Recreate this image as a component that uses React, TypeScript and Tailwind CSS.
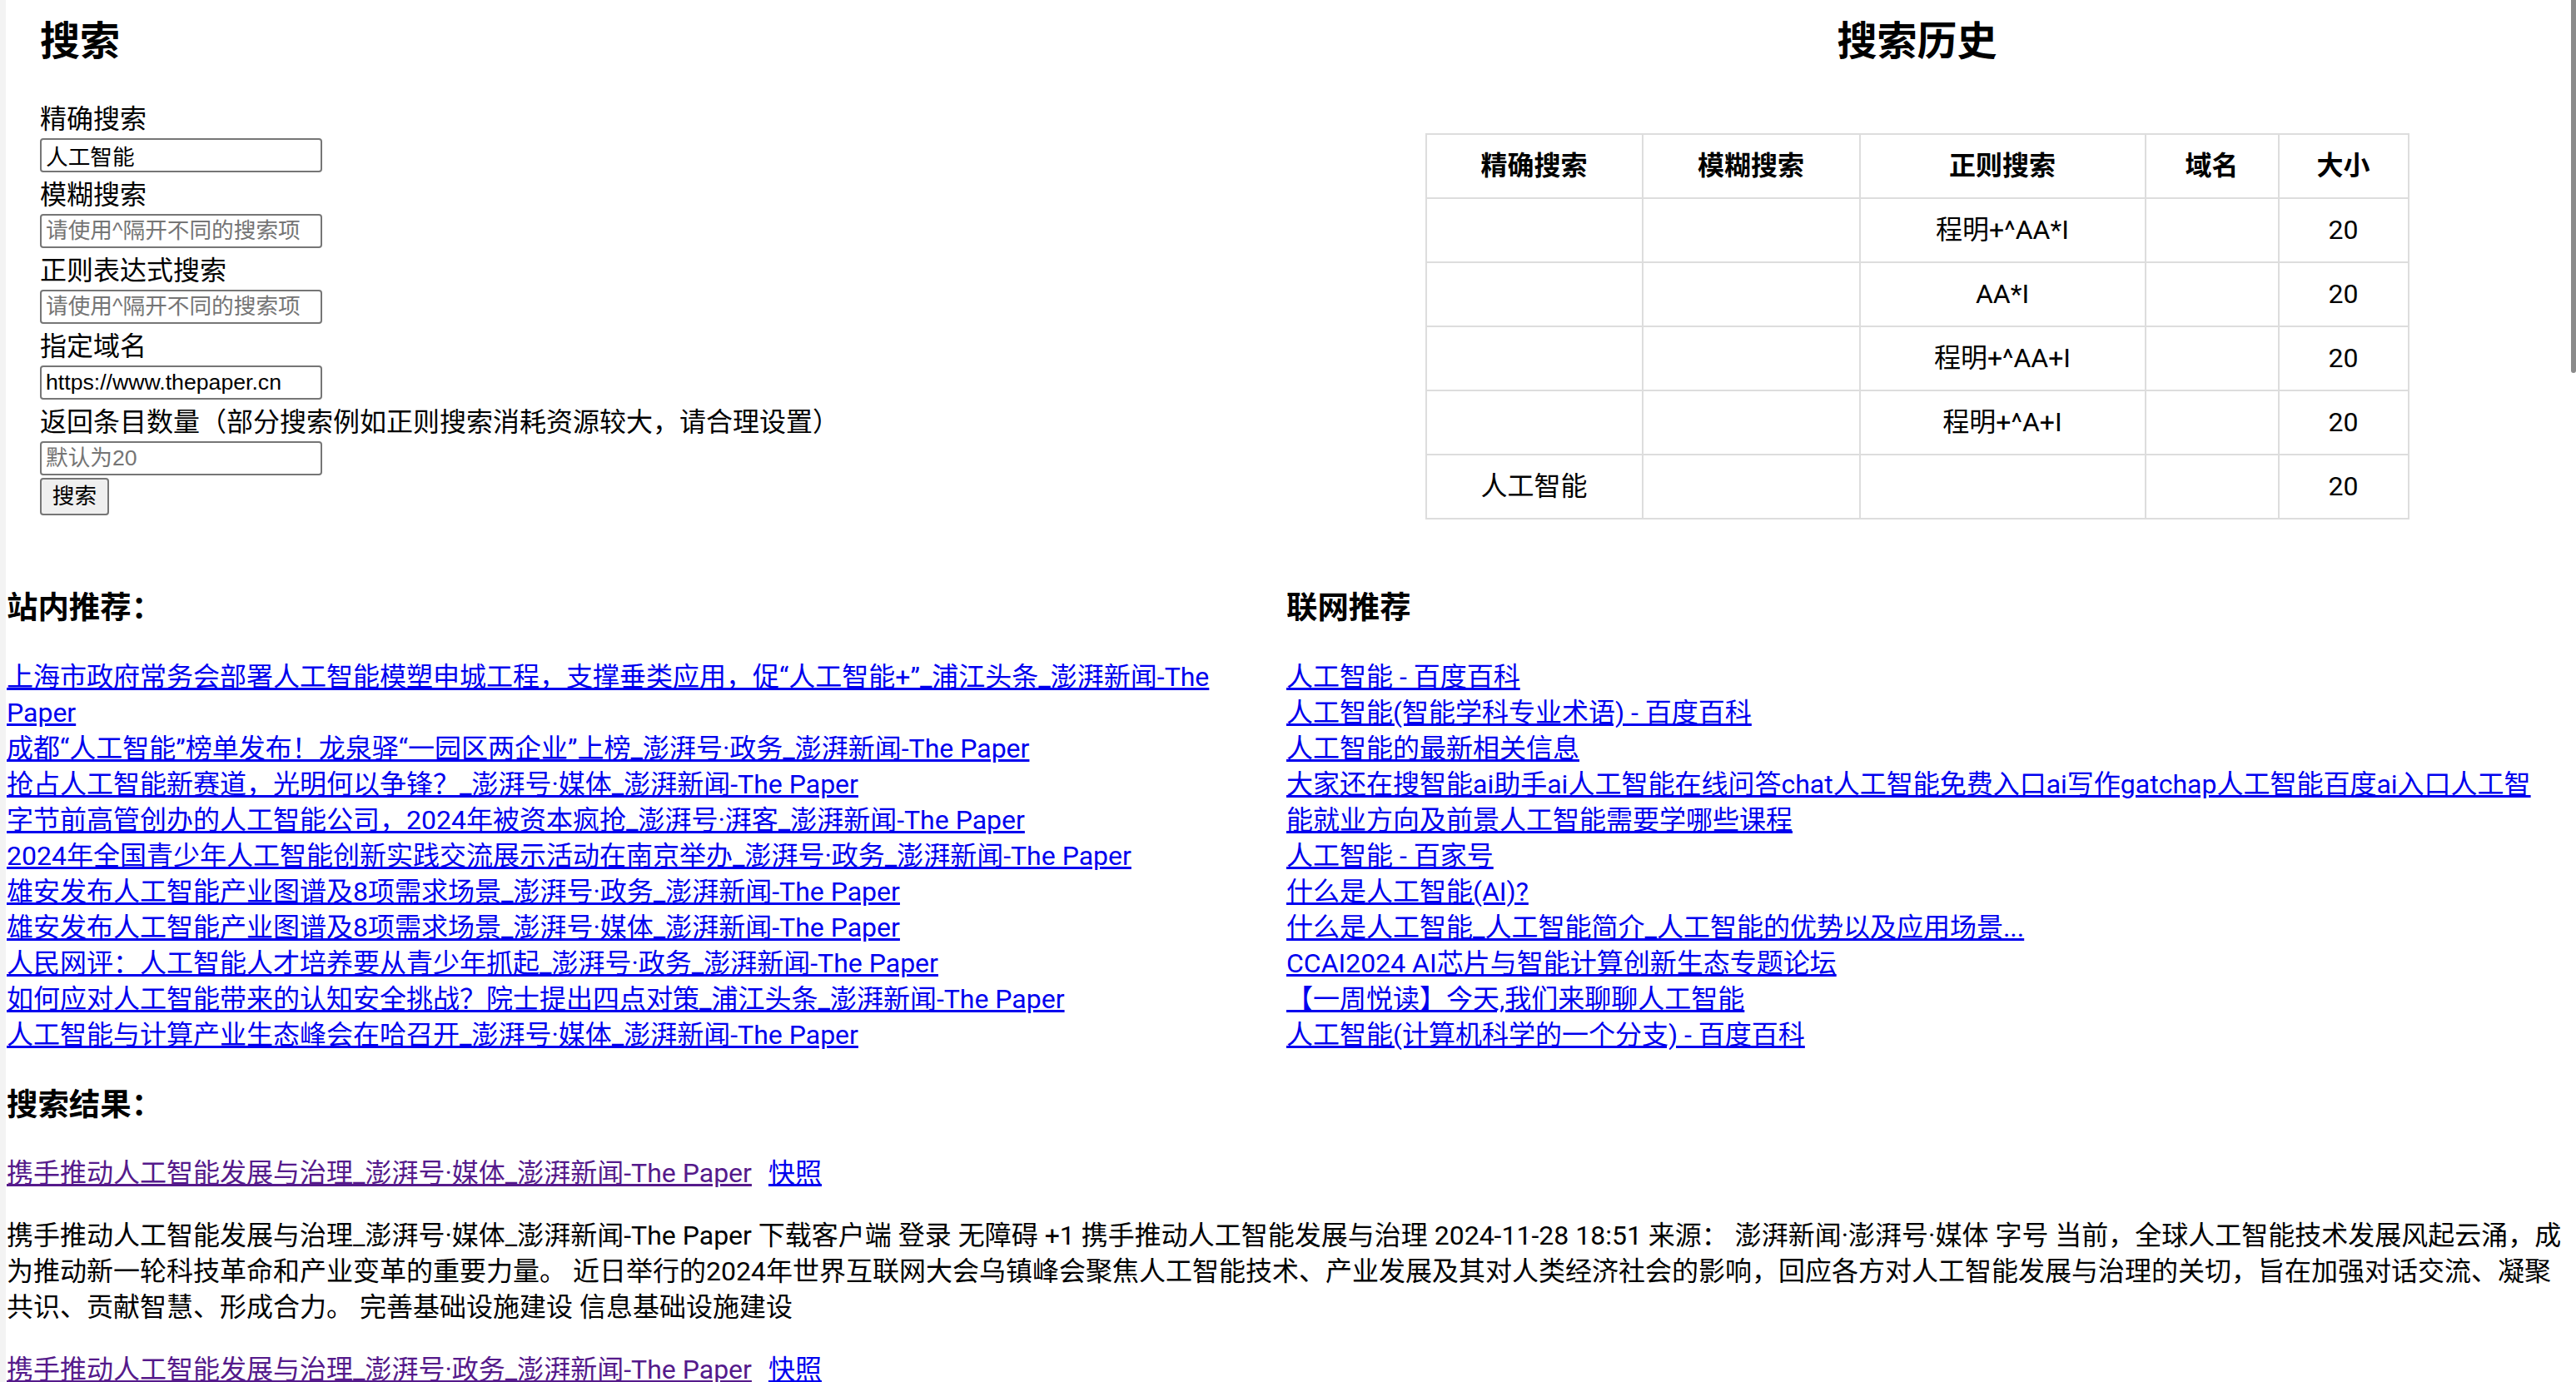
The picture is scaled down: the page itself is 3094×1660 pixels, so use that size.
import React from "react";

const siteLinks = [
    "上海市政府常务会部署人工智能模塑申城工程，支撑垂类应用，促“人工智能+”_浦江头条_澎湃新闻-The Paper",
    "成都“人工智能”榜单发布！龙泉驿“一园区两企业”上榜_澎湃号·政务_澎湃新闻-The Paper",
    "抢占人工智能新赛道，光明何以争锋？_澎湃号·媒体_澎湃新闻-The Paper",
    "字节前高管创办的人工智能公司，2024年被资本疯抢_澎湃号·湃客_澎湃新闻-The Paper",
    "2024年全国青少年人工智能创新实践交流展示活动在南京举办_澎湃号·政务_澎湃新闻-The Paper",
    "雄安发布人工智能产业图谱及8项需求场景_澎湃号·政务_澎湃新闻-The Paper",
    "雄安发布人工智能产业图谱及8项需求场景_澎湃号·媒体_澎湃新闻-The Paper",
    "人民网评：人工智能人才培养要从青少年抓起_澎湃号·政务_澎湃新闻-The Paper",
    "如何应对人工智能带来的认知安全挑战？院士提出四点对策_浦江头条_澎湃新闻-The Paper",
    "人工智能与计算产业生态峰会在哈召开_澎湃号·媒体_澎湃新闻-The Paper",
];

const webLinks = [
    "人工智能 - 百度百科",
    "人工智能(智能学科专业术语) - 百度百科",
    "人工智能的最新相关信息",
    "大家还在搜智能ai助手ai人工智能在线问答chat人工智能免费入口ai写作gatchap人工智能百度ai入口人工智能就业方向及前景人工智能需要学哪些课程",
    "人工智能 - 百家号",
    "什么是人工智能(AI)?",
    "什么是人工智能_人工智能简介_人工智能的优势以及应用场景...",
    "CCAI2024 AI芯片与智能计算创新生态专题论坛",
    "【一周悦读】今天,我们来聊聊人工智能",
    "人工智能(计算机科学的一个分支) - 百度百科",
];

const history = [
    ["", "", "程明+^AA*I", "", "20"],
    ["", "", "AA*I", "", "20"],
    ["", "", "程明+^AA+I", "", "20"],
    ["", "", "程明+^A+I", "", "20"],
    ["人工智能", "", "", "", "20"],
];

const fields = [
    {label: "精确搜索", name: "exact", value: "人工智能", placeholder: ""},
    {label: "模糊搜索", name: "fuzzy", value: "", placeholder: "请使用^隔开不同的搜索项"},
    {label: "正则表达式搜索", name: "regex", value: "", placeholder: "请使用^隔开不同的搜索项"},
    {label: "指定域名", name: "domain", value: "https://www.thepaper.cn", placeholder: ""},
    {label: "返回条目数量（部分搜索例如正则搜索消耗资源较大，请合理设置）", name: "size", value: "", placeholder: "默认为20"},
];

const results = [
    {
        title: "携手推动人工智能发展与治理_澎湃号·媒体_澎湃新闻-The Paper",
        body: "携手推动人工智能发展与治理_澎湃号·媒体_澎湃新闻-The Paper 下载客户端 登录 无障碍 +1 携手推动人工智能发展与治理 2024-11-28 18:51 来源： 澎湃新闻·澎湃号·媒体 字号 当前，全球人工智能技术发展风起云涌，成为推动新一轮科技革命和产业变革的重要力量。 近日举行的2024年世界互联网大会乌镇峰会聚焦人工智能技术、产业发展及其对人类经济社会的影响，回应各方对人工智能发展与治理的关切，旨在加强对话交流、凝聚共识、贡献智慧、形成合力。 完善基础设施建设 信息基础设施建设",
    },
    {
        title: "携手推动人工智能发展与治理_澎湃号·政务_澎湃新闻-The Paper",
        body: "携手推动人工智能发展与治理_澎湃号·政务_澎湃新闻-The Paper 下载客户端 登录 无障碍 +1 携手推动人工智能发展与治理 2024-11-28 来源： 澎湃新闻·澎湃号·政务",
    },
];

const colWidths = ["w-[260px]", "w-[261px]", "w-[343px]", "w-[160px]", "w-[156px]"];

export default function App() {
    return (
        <div className="relative h-[1660px] overflow-hidden bg-white text-black border-l-[7px] border-[#f3f3f3] pl-px pr-[8px] font-['Roboto','Noto_Sans_CJK_SC',sans-serif] text-[32px] leading-[43px]">
            <div className="grid grid-cols-[1537px_1510px]">
                <div className="pl-[40px] pt-[22px]">
                    <h2 className="text-[48px] leading-[56px] font-bold">搜索</h2>
                    <form className="mt-[44px]" onSubmit={(e) => e.preventDefault()}>
                        {fields.map((f, i) => (
                            <div key={f.name}>
                                <div className="h-[44px] leading-[43px] whitespace-nowrap">{f.label}</div>
                                <div className={i === fields.length - 1 ? "h-[44px]" : "h-[47px]"}>
                                    <input type="text"
                                           name={f.name}
                                           defaultValue={f.value}
                                           placeholder={f.placeholder}
                                           className="block w-[339px] h-[41px] px-[5px] border-2 border-[#767676] rounded-[4px] font-['Liberation_Sans','Noto_Sans_CJK_SC',sans-serif] text-[26.67px] leading-[37px] placeholder:text-[#757575] outline-none"/>
                                </div>
                            </div>
                        ))}
                        <button type="submit"
                                className="block w-[83px] h-[45px] bg-[#efefef] border-2 border-[#767676] rounded-[4px] font-['Liberation_Sans','Noto_Sans_CJK_SC',sans-serif] text-[26.67px] leading-[41px] text-center">
                            搜索
                        </button>
                    </form>
                </div>
                <div className="flex flex-col items-center pt-[22px] pl-[5px]">
                    <h2 className="text-[48px] leading-[56px] font-bold">搜索历史</h2>
                    <table className="mt-[82px] w-[1180px] table-fixed border-collapse">
                        <thead>
                        <tr>
                            {["精确搜索", "模糊搜索", "正则搜索", "域名", "大小"].map((h, i) => (
                                <th key={h} className={`${colWidths[i]} h-[77px] p-0 border-2 border-[#dddddd] font-bold text-center`}>{h}</th>
                            ))}
                        </tr>
                        </thead>
                        <tbody>
                        {history.map((row, r) => (
                            <tr key={r}>
                                {row.map((c, i) => (
                                    <td key={i} className="h-[77px] p-0 border-2 border-[#dddddd] text-center">{c}</td>
                                ))}
                            </tr>
                        ))}
                        </tbody>
                    </table>
                </div>
            </div>

            <div className="grid grid-cols-[1537px_1510px] mt-[83px]">
                <div className="pr-[22px]">
                    <h3 className="text-[37.44px] leading-[46px] font-bold">站内推荐：</h3>
                    <ul className="mt-[39px]">
                        {siteLinks.map((t) => (
                            <li key={t}><a href="#" className="text-[#0000ee] underline">{t}</a></li>
                        ))}
                    </ul>
                </div>
                <div>
                    <h3 className="text-[37.44px] leading-[46px] font-bold">联网推荐</h3>
                    <ul className="mt-[39px]">
                        {webLinks.map((t) => (
                            <li key={t}><a href="#" className="text-[#0000ee] underline">{t}</a></li>
                        ))}
                    </ul>
                </div>
            </div>

            <h3 className="mt-[39px] text-[37.44px] leading-[46px] font-bold">搜索结果：</h3>
            <div className="mt-[38px]">
                {results.map((r, i) => (
                    <div key={i} className={i > 0 ? "mt-[32px]" : ""}>
                        <div>
                            <a href="#" className="text-[#551a8b] underline">{r.title}</a>
                            <a href="#" className="ml-[20px] text-[#0000ee] underline">快照</a>
                        </div>
                        <p className="mt-[32px]">{r.body}</p>
                    </div>
                ))}
            </div>

            <div className="absolute top-0 right-0 w-[6px] h-[448px] bg-[#8b8b8b] rounded-b-[3px]"/>
        </div>
    );
}
